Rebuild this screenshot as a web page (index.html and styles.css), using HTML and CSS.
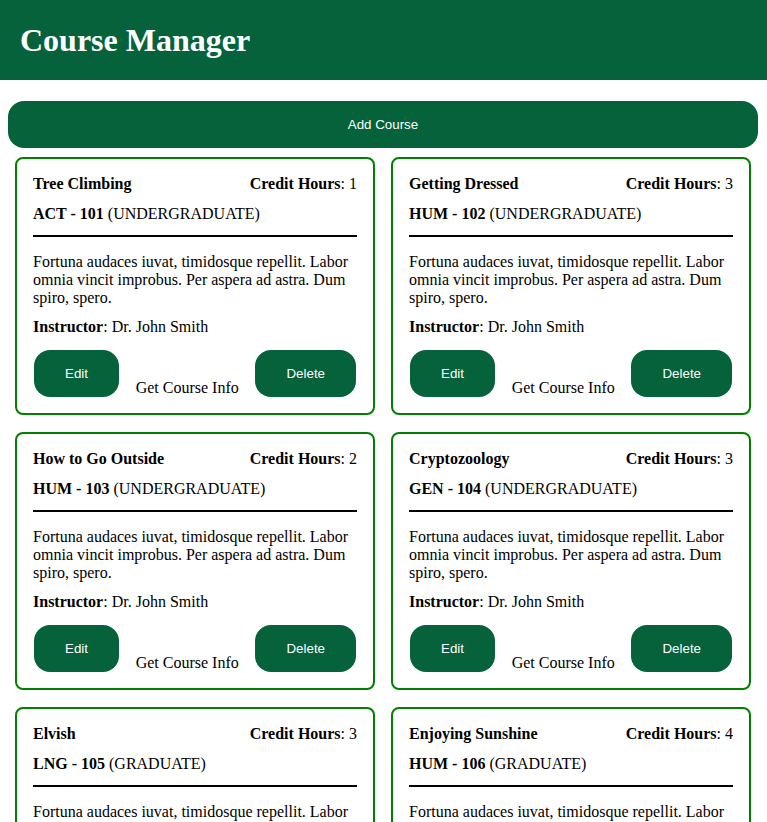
FILE: index.html
```html
<!DOCTYPE html>
<html lang="en">
<head>
<meta charset="utf-8">
<title>Course Manager</title>
<link rel="stylesheet" href="styles.css">
</head>
<body>
<header class="topbar">
  <h1 class="topbar-title">Course Manager</h1>
</header>
<main class="main">
  <button class="btn btn-add">Add Course</button>
  <section class="course-grid">
    <article class="card">
      <div class="card-head"><span class="card-title">Tree Climbing</span><span><b>Credit Hours</b>: 1</span></div>
      <div class="card-code"><b>ACT - 101</b> (UNDERGRADUATE)</div>
      <hr class="card-rule">
      <p class="card-desc">Fortuna audaces iuvat, timidosque repellit. Labor omnia vincit improbus. Per aspera ad astra. Dum spiro, spero.</p>
      <p class="card-instr"><b>Instructor</b>: Dr. John Smith</p>
      <div class="card-actions"><button class="btn btn-small">Edit</button><button class="link-btn">Get Course Info</button><button class="btn btn-small">Delete</button></div>
    </article>
    <article class="card">
      <div class="card-head"><span class="card-title">Getting Dressed</span><span><b>Credit Hours</b>: 3</span></div>
      <div class="card-code"><b>HUM - 102</b> (UNDERGRADUATE)</div>
      <hr class="card-rule">
      <p class="card-desc">Fortuna audaces iuvat, timidosque repellit. Labor omnia vincit improbus. Per aspera ad astra. Dum spiro, spero.</p>
      <p class="card-instr"><b>Instructor</b>: Dr. John Smith</p>
      <div class="card-actions"><button class="btn btn-small">Edit</button><button class="link-btn">Get Course Info</button><button class="btn btn-small">Delete</button></div>
    </article>
    <article class="card">
      <div class="card-head"><span class="card-title">How to Go Outside</span><span><b>Credit Hours</b>: 2</span></div>
      <div class="card-code"><b>HUM - 103</b> (UNDERGRADUATE)</div>
      <hr class="card-rule">
      <p class="card-desc">Fortuna audaces iuvat, timidosque repellit. Labor omnia vincit improbus. Per aspera ad astra. Dum spiro, spero.</p>
      <p class="card-instr"><b>Instructor</b>: Dr. John Smith</p>
      <div class="card-actions"><button class="btn btn-small">Edit</button><button class="link-btn">Get Course Info</button><button class="btn btn-small">Delete</button></div>
    </article>
    <article class="card">
      <div class="card-head"><span class="card-title">Cryptozoology</span><span><b>Credit Hours</b>: 3</span></div>
      <div class="card-code"><b>GEN - 104</b> (UNDERGRADUATE)</div>
      <hr class="card-rule">
      <p class="card-desc">Fortuna audaces iuvat, timidosque repellit. Labor omnia vincit improbus. Per aspera ad astra. Dum spiro, spero.</p>
      <p class="card-instr"><b>Instructor</b>: Dr. John Smith</p>
      <div class="card-actions"><button class="btn btn-small">Edit</button><button class="link-btn">Get Course Info</button><button class="btn btn-small">Delete</button></div>
    </article>
    <article class="card">
      <div class="card-head"><span class="card-title">Elvish</span><span><b>Credit Hours</b>: 3</span></div>
      <div class="card-code"><b>LNG - 105</b> (GRADUATE)</div>
      <hr class="card-rule">
      <p class="card-desc">Fortuna audaces iuvat, timidosque repellit. Labor omnia vincit improbus. Per aspera ad astra. Dum spiro, spero.</p>
      <p class="card-instr"><b>Instructor</b>: Dr. John Smith</p>
      <div class="card-actions"><button class="btn btn-small">Edit</button><button class="link-btn">Get Course Info</button><button class="btn btn-small">Delete</button></div>
    </article>
    <article class="card">
      <div class="card-head"><span class="card-title">Enjoying Sunshine</span><span><b>Credit Hours</b>: 4</span></div>
      <div class="card-code"><b>HUM - 106</b> (GRADUATE)</div>
      <hr class="card-rule">
      <p class="card-desc">Fortuna audaces iuvat, timidosque repellit. Labor omnia vincit improbus. Per aspera ad astra. Dum spiro, spero.</p>
      <p class="card-instr"><b>Instructor</b>: Dr. John Smith</p>
      <div class="card-actions"><button class="btn btn-small">Edit</button><button class="link-btn">Get Course Info</button><button class="btn btn-small">Delete</button></div>
    </article>
  </section>
</main>
</body>
</html>
```

FILE: styles.css
```css
* { box-sizing: border-box; }

body {
  margin: 0;
  font-family: "Liberation Serif", "Times New Roman", serif;
  font-size: 16px;
  line-height: 18px;
  color: #000;
  background: #fff;
}

.topbar {
  height: 80px;
  background: #05623a;
  display: flex;
  align-items: center;
  padding: 0 20px;
}

.topbar-title {
  margin: 0;
  color: #fff;
  font-size: 32px;
  line-height: 37px;
  font-weight: bold;
}

.main {
  padding: 21px 9px 8px 8px;
}

.btn {
  display: block;
  border: none;
  background: #05623a;
  color: #fff;
  font-family: "Liberation Sans", Arial, sans-serif;
  font-size: 13.333px;
  line-height: 15px;
  border-radius: 16px;
  cursor: pointer;
}

.btn-add {
  width: 100%;
  height: 47px;
}

.course-grid {
  display: grid;
  grid-template-columns: 1fr 1fr;
  column-gap: 16px;
  row-gap: 17px;
  padding: 9px 7px 0;
}

.card {
  border: 2px solid #008000;
  border-radius: 8px;
  padding: 16px;
  display: flex;
  flex-direction: column;
}

.card-head {
  display: flex;
  justify-content: space-between;
  height: 18px;
}

.card-title { font-weight: bold; }

.card-code {
  margin-top: 12px;
  height: 18px;
}

.card-rule {
  margin: 12px 0 0;
  border: none;
  height: 2px;
  background: #000;
}

.card-desc {
  margin: 16px 0 0;
}

.card-instr {
  margin: 11px 0 0;
}

.card-actions {
  margin-top: 14px;
  display: flex;
  justify-content: space-between;
  align-items: flex-end;
  padding: 0 1px;
}

.btn-small {
  height: 47px;
  padding: 0 31px;
}

.link-btn {
  border: none;
  background: none;
  padding: 0;
  font-family: "Liberation Serif", "Times New Roman", serif;
  font-size: 16px;
  line-height: 18px;
  color: #000;
  cursor: pointer;
}
```
